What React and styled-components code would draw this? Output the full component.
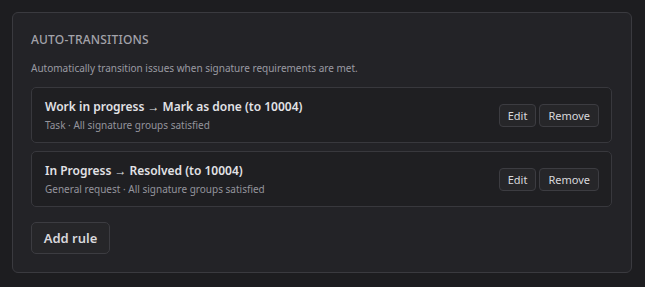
import styled, { createGlobalStyle } from "styled-components";

const rules = [
  {
    id: 1,
    title: "Work in progress → Mark as done (to 10004)",
    meta: "Task · All signature groups satisfied",
  },
  {
    id: 2,
    title: "In Progress → Resolved (to 10004)",
    meta: "General request · All signature groups satisfied",
  },
];

function App() {
  return (
    <>
      <GlobalStyle />
      <Page>
        <Panel>
          <Heading>Auto-transitions</Heading>
          <Description>
            Automatically transition issues when signature requirements are met.
          </Description>

          <RuleList>
            {rules.map((r) => (
              <RuleCard key={r.id}>
                <RuleText>
                  <RuleTitle>{r.title}</RuleTitle>
                  <RuleMeta>{r.meta}</RuleMeta>
                </RuleText>
                <Actions>
                  <SmallButton>Edit</SmallButton>
                  <SmallButton>Remove</SmallButton>
                </Actions>
              </RuleCard>
            ))}
          </RuleList>

          <AddButton>Add rule</AddButton>
        </Panel>
      </Page>
    </>
  );
}

const GlobalStyle = createGlobalStyle`
  html, body {
    margin: 0;
    background: #1d1d20;
    font-family: "Noto Sans", "Open Sans", sans-serif;
  }
`;

const Page = styled.div`
  padding: 12px 13px 13px 12px;
  min-height: 287px;
  box-sizing: border-box;
`;

const Panel = styled.section`
  background: #232327;
  border: 1px solid #3a3a3f;
  border-radius: 6px;
  padding: 19px 19px 18px 18px;
  display: flex;
  flex-direction: column;
`;

const Heading = styled.h2`
  margin: 0;
  font-size: 12px;
  font-weight: 500;
  letter-spacing: 0.2px;
  text-transform: uppercase;
  color: #a3a3ab;
  line-height: 16px;
`;

const Description = styled.p`
  margin: 13px 0 12px;
  font-size: 10px;
  color: #9a9aa2;
  line-height: 14px;
`;

const RuleList = styled.ul`
  list-style: none;
  margin: 0;
  padding: 0;
  display: flex;
  flex-direction: column;
  gap: 8px;
`;

const RuleCard = styled.li`
  display: flex;
  align-items: center;
  justify-content: space-between;
  background: #1f1f22;
  border: 1px solid #38383d;
  border-radius: 5px;
  padding: 0 12px 0 13px;
  height: 56px;
  box-sizing: border-box;
`;

const RuleText = styled.div`
  display: flex;
  flex-direction: column;
  gap: 2px;
`;

const RuleTitle = styled.span`
  font-size: 12px;
  font-weight: 600;
  color: #e2e2e6;
  line-height: 18px;
`;

const RuleMeta = styled.span`
  font-size: 10px;
  color: #94949c;
  line-height: 14px;
`;

const Actions = styled.div`
  display: flex;
  gap: 3px;
`;

const SmallButton = styled.button`
  font-family: inherit;
  font-size: 11px;
  color: #d8d8dc;
  background: #262629;
  border: 1px solid #3c3c41;
  border-radius: 4px;
  height: 23px;
  padding: 0 8px;
  cursor: pointer;
`;

const AddButton = styled.button`
  align-self: flex-start;
  margin-top: 15px;
  font-family: inherit;
  font-size: 13px;
  font-weight: 600;
  color: #d8d8dc;
  background: #262629;
  border: 1px solid #3c3c41;
  border-radius: 5px;
  height: 32px;
  width: 79px;
  cursor: pointer;
`;

export default App;
